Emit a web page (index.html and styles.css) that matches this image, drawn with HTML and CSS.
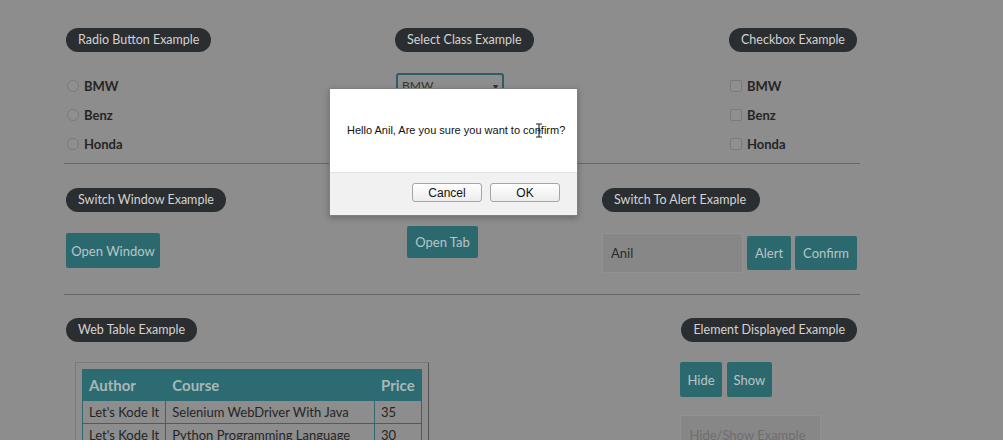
FILE: index.html
```html
<!DOCTYPE html>
<html>
<head>
<meta charset="utf-8">
<link rel="stylesheet" href="styles.css">
</head>
<body>
<div class="page">
  <section class="row row-one">
    <div class="col">
      <div class="pill">Radio Button Example</div>
      <div class="options">
        <label class="opt"><span class="radio"></span>BMW</label>
        <label class="opt"><span class="radio"></span>Benz</label>
        <label class="opt"><span class="radio"></span>Honda</label>
      </div>
    </div>
    <div class="col">
      <div class="pill">Select Class Example</div>
      <div class="select"><span>BMW</span><span class="caret">▾</span></div>
    </div>
    <div class="col">
      <div class="pill">Checkbox Example</div>
      <div class="options">
        <label class="opt"><span class="check"></span>BMW</label>
        <label class="opt"><span class="check"></span>Benz</label>
        <label class="opt"><span class="check"></span>Honda</label>
      </div>
    </div>
  </section>
  <hr class="rule">
  <section class="row row-two">
    <div class="col">
      <div class="pill">Switch Window Example</div>
      <button class="btn btn-window">Open Window</button>
    </div>
    <div class="col col-tab">
      <button class="btn btn-tab">Open Tab</button>
    </div>
    <div class="col">
      <div class="pill pill-alert">Switch To Alert Example</div>
      <div class="alert-row">
        <div class="field">Anil</div>
        <button class="btn btn-sm">Alert</button>
        <button class="btn btn-sm">Confirm</button>
      </div>
    </div>
  </section>
  <hr class="rule rule-two">
  <section class="row row-three">
    <div class="col">
      <div class="pill">Web Table Example</div>
      <div class="table-box">
        <table class="courses">
          <thead><tr><th class="c-author">Author</th><th class="c-course">Course</th><th class="c-price">Price</th></tr></thead>
          <tbody>
            <tr><td>Let's Kode It</td><td>Selenium WebDriver With Java</td><td>35</td></tr>
            <tr><td>Let's Kode It</td><td>Python Programming Language</td><td>30</td></tr>
          </tbody>
        </table>
      </div>
    </div>
    <div class="col">
      <div class="pill">Element Displayed Example</div>
      <div class="hs-buttons">
        <button class="btn btn-hs">Hide</button>
        <button class="btn btn-hs">Show</button>
      </div>
      <div class="field field-hs">Hide/Show Example</div>
    </div>
  </section>
</div>

<div class="dialog">
  <div class="dialog-body">Hello Anil, Are you sure you want to confirm?</div>
  <div class="dialog-foot">
    <button class="dbtn">Cancel</button>
    <button class="dbtn">OK</button>
  </div>
</div>
<svg class="ibeam" width="8" height="15" viewBox="0 0 8 15"><path d="M1 1h2.5L4 1.6 4.5 1H7M4 1.6v11.8M1 14h2.5l.5-.6.5.6H7M2.5 7.5h3" fill="none" stroke="#222" stroke-width="1.1"/></svg>
</body>
</html>
```
FILE: styles.css
```css
html, body {
  margin: 0;
  padding: 0;
  background: #8d8d8d;
  font-family: Lato, "Open Sans", sans-serif;
  color: #232323;
  overflow: hidden;
  height: 440px;
}
.page {
  margin-left: 64px;
  width: 796px;
  padding-top: 28px;
}
.row {
  display: grid;
  padding: 0 3px 0 2px;
}
.row-one { grid-template-columns: 329px 334px 1fr; }
.row-two { grid-template-columns: 341px 195px 1fr; }
.row-three { grid-template-columns: 1fr auto; }
.col { display: flex; flex-direction: column; align-items: flex-start; }
.pill {
  background: #2b2e30;
  color: #d3d3d3;
  font-size: 12.5px;
  height: 24px;
  line-height: 24px;
  padding: 0 12px;
  border-radius: 12px;
  white-space: nowrap;
}
.pill-alert { padding: 0 14px 0 12px; }
.options { margin-top: 25px; display: flex; flex-direction: column; gap: 11px; }
.opt {
  display: flex;
  align-items: center;
  font-size: 13px;
  font-weight: bold;
  height: 18px;
  color: #252525;
}
.radio {
  width: 10px; height: 10px;
  border: 1px solid #7a7a7a;
  border-radius: 50%;
  margin: 0 5px 0 1px;
  background: #8f8f8f;
}
.check {
  width: 10px; height: 10px;
  border: 1px solid #7a7a7a;
  border-radius: 2px;
  margin: 0 5px 0 1px;
  background: #8f8f8f;
}
.select {
  margin-top: 21px;
  margin-left: 1px;
  width: 96px;
  height: 22px;
  border: 2px solid #2c5e62;
  border-radius: 3px;
  display: flex;
  justify-content: space-between;
  padding: 0 4px;
  font-size: 12px;
  line-height: 22px;
  color: #333;
}
.caret { font-size: 10px; }
.rule {
  border: 0;
  border-top: 1px solid #666;
  margin: 10px 0 0 0;
  height: 0;
}
.row-two { margin-top: 24px; }
.btn {
  font-family: Lato, "Open Sans", sans-serif;
  background: #2c696f;
  color: #b7c5c6;
  border: 0;
  border-radius: 2px;
  font-size: 13px;
  padding: 0;
}
.btn-window { margin-top: 21px; width: 94px; height: 35px; }
.col-tab { padding-top: 38px; }
.btn-tab { width: 71px; height: 32px; }
.alert-row { display: flex; gap: 4px; margin-top: 21px; align-items: flex-start; }
.field {
  box-sizing: border-box;
  width: 141px;
  height: 40px;
  background: #878787;
  border: 1px solid #929292;
  font-size: 13px;
  line-height: 38px;
  padding-left: 8px;
  color: #2a2a2a;
}
.btn-sm { height: 34px; margin-top: 3px; padding: 0 8px; }
.rule-two { margin-top: 21px; }
.row-three { margin-top: 23px; }
.table-box {
  margin: 20px 0 0 9px;
  width: 340px;
  padding: 6px;
  border: 1px solid #7a7a7a;
  border-right-color: #555;
}
.courses {
  border-collapse: collapse;
  width: 340px;
  font-size: 13px;
}
.courses th {
  background: #2c6b71;
  color: #a8b7b8;
  font-size: 15px;
  text-align: left;
  height: 30px;
  padding: 0 6px;
  border: 1px solid #2c6b71;
}
.courses td {
  border: 1px solid #2e696f;
  height: 22px;
  padding: 0 6px;
  color: #252525;
  white-space: nowrap;
}
.c-author { width: 70px; }
.c-price { width: 34px; }
.hs-buttons { display: flex; gap: 5px; margin-top: 20px; margin-left: -1px; }
.btn-hs { height: 35px; padding: 0 7px; }
.field-hs { margin-top: 18px; margin-left: -1px; color: #6e6e6e; }

.dialog {
  position: absolute;
  left: 329px;
  top: 88px;
  width: 247px;
  height: 126px;
  background: #fff;
  border: 1px solid #7f7f7f;
  box-shadow: 0 2px 6px rgba(0,0,0,0.25);
  display: flex;
  flex-direction: column;
  font-family: "Liberation Sans", Arial, sans-serif;
}
.dialog-body {
  height: 83px;
  font-size: 11px;
  color: #111;
  padding: 35px 0 0 17px;
  box-sizing: border-box;
  white-space: nowrap;
}
.dialog-foot {
  flex: 1;
  background: #f1f1f1;
  border-top: 1px solid #e2e2e2;
  display: flex;
  justify-content: flex-end;
  align-items: flex-start;
  gap: 8px;
  padding: 10px 17px 0 0;
}
.dbtn {
  width: 70px;
  height: 19px;
  font-family: "Liberation Sans", Arial, sans-serif;
  font-size: 12px;
  color: #111;
  background: linear-gradient(#ffffff, #ececec);
  border: 1px solid #a5a5a5;
  border-radius: 3px;
  padding: 0;
}
.ibeam { position: absolute; left: 535px; top: 123px; }
```
